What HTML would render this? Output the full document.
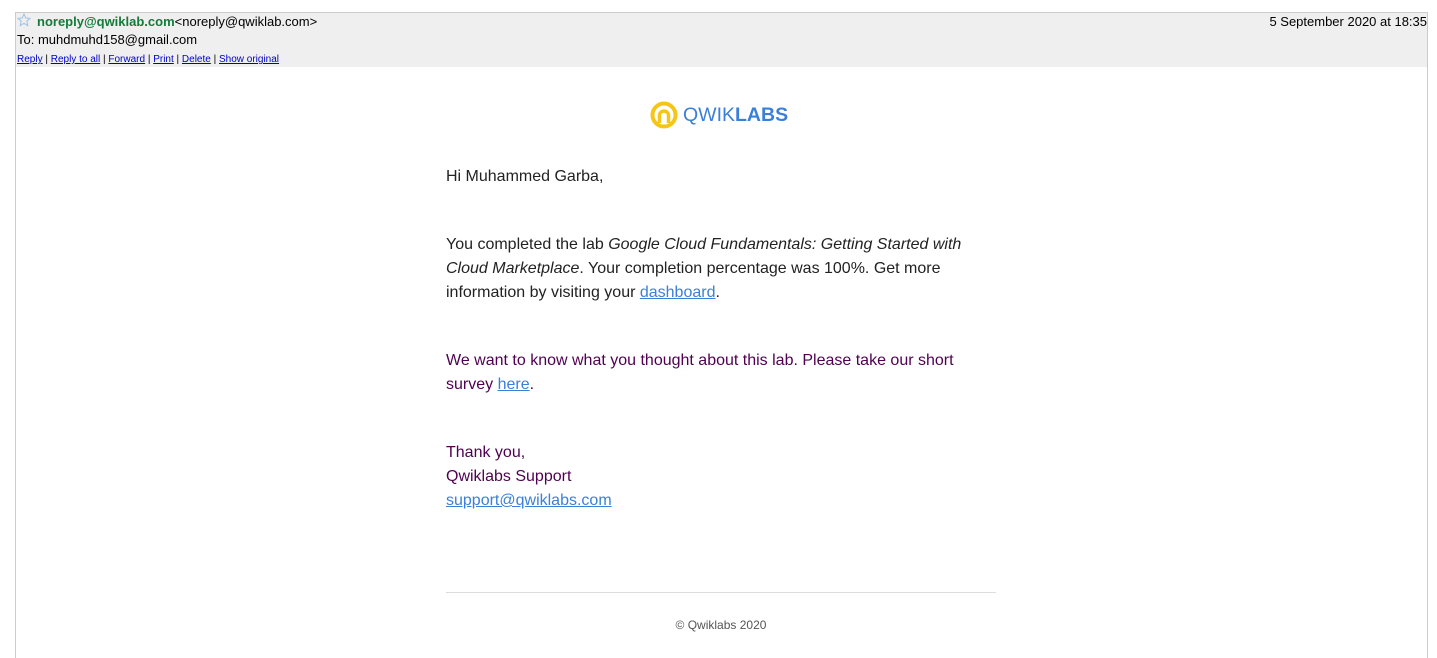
<!DOCTYPE html>
<html><head><meta charset="utf-8"><style>
html,body{margin:0;background:#fff;font-family:"Liberation Sans",Arial,sans-serif;width:1437px;height:658px;overflow:hidden;position:relative}
.frame{position:absolute;left:15px;top:12px;width:1411px;height:646px;border:1px solid #ccc;border-bottom:none;box-sizing:border-box;width:1413px}
.hdr{position:absolute;left:16px;top:13px;width:1411px;height:54px;background:#efefef}
.a{position:absolute;font-size:13px;color:#000;white-space:nowrap}
.links{position:absolute;left:17px;top:54px;font-size:10px;color:#000;white-space:nowrap}
.links a{color:#00c;text-decoration:underline}
.p{position:absolute;left:446px;font-size:16px;line-height:24px;color:#222;width:540px}
.p a{color:#3b7fd9;text-decoration:underline}
.pur{color:#500050}
</style></head><body>
<div class="frame"></div>
<div class="hdr"></div>
<svg style="position:absolute;left:17px;top:13px" width="14" height="14" viewBox="0 0 14 14"><polygon points="7,1 8.8,5 13,5.3 9.8,8.2 10.8,12.6 7,10.3 3.2,12.6 4.2,8.2 1,5.3 5.2,5" fill="none" stroke="#9ec3e6" stroke-width="1"/></svg>
<div class="a" style="left:37px;top:14px"><b style="color:#167a3a">noreply@qwiklab.com</b>&lt;noreply@qwiklab.com&gt;</div>
<div class="a" style="left:17px;top:32px">To: muhdmuhd158@gmail.com</div>
<div class="a" style="right:10px;top:14px">5 September 2020 at 18:35</div>
<div class="links"><a>Reply</a> | <a>Reply to all</a> | <a>Forward</a> | <a>Print</a> | <a>Delete</a> | <a>Show original</a></div>
<svg style="position:absolute;left:650px;top:101px" width="28" height="28" viewBox="0 0 28 28"><circle cx="14" cy="14" r="11.5" fill="none" stroke="#f5c518" stroke-width="4"/><path d="M9.5 22 V14.5 a4.5 4.5 0 0 1 9 0 V22" fill="none" stroke="#f5c518" stroke-width="3.5"/></svg>
<div style="position:absolute;left:683px;top:103px;font-size:19.5px;color:#3b7fd9;line-height:24px;white-space:nowrap"><span style="font-weight:300">QWIK</span><b>LABS</b></div>
<div class="p" style="top:165px">Hi Muhammed Garba,</div>
<div class="p" style="top:233px">You completed the lab <i>Google Cloud Fundamentals: Getting Started with Cloud Marketplace</i>. Your completion percentage was 100%. Get more information by visiting your <a>dashboard</a>.</div>
<div class="p pur" style="top:349px">We want to know what you thought about this lab. Please take our short survey <a>here</a>.</div>
<div class="p pur" style="top:441px">Thank you,<br>Qwiklabs Support<br><a>support@qwiklabs.com</a></div>
<div style="position:absolute;left:446px;top:592px;width:550px;height:1px;background:#ddd"></div>
<div style="position:absolute;left:446px;top:618px;width:550px;text-align:center;font-size:12px;color:#555">© Qwiklabs 2020</div>
</body></html>
